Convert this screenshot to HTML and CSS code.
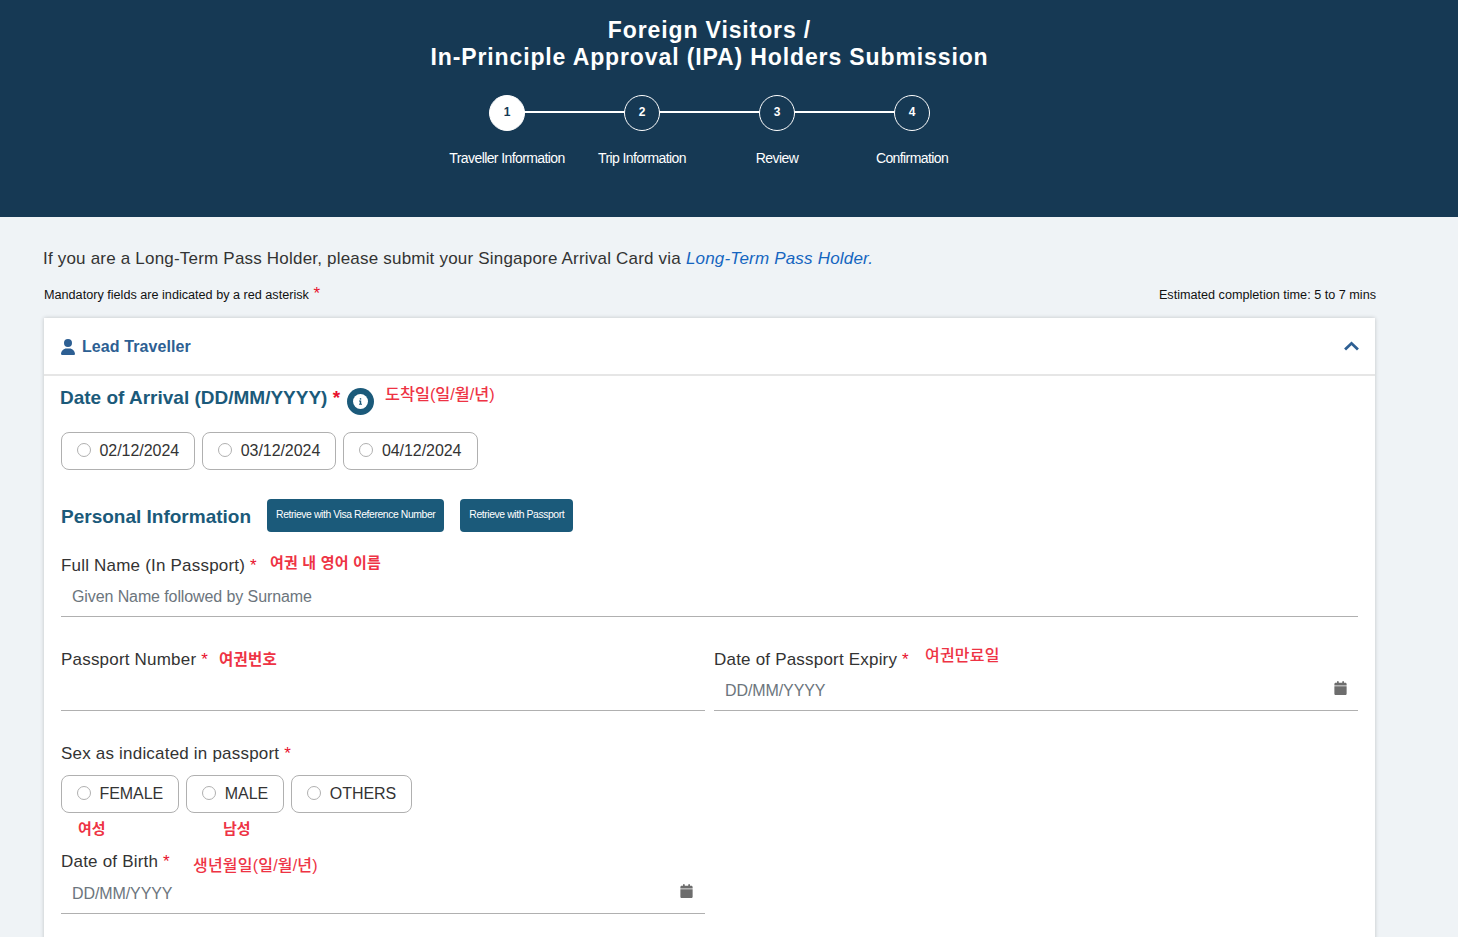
FILE: index.html
```html
<!DOCTYPE html>
<html lang="en">
<head>
<meta charset="utf-8">
<title>Foreign Visitors Submission</title>
<link rel="stylesheet" href="styles.css">
</head>
<body>
<header class="hero">
  <h1 class="hero-title">Foreign Visitors /<br>In-Principle Approval (IPA) Holders Submission</h1>
  <ol class="stepper">
    <li class="step step-active"><span class="step-dot">1</span><span class="step-label">Traveller Information</span></li>
    <li class="step"><span class="step-dot">2</span><span class="step-label">Trip Information</span></li>
    <li class="step"><span class="step-dot">3</span><span class="step-label">Review</span></li>
    <li class="step"><span class="step-dot">4</span><span class="step-label">Confirmation</span></li>
  </ol>
</header>
<main class="content">
  <p class="intro">If you are a Long-Term Pass Holder, please submit your Singapore Arrival Card via <a class="intro-link" href="#">Long-Term Pass Holder.</a></p>
  <div class="meta-row">
    <span>Mandatory fields are indicated by a red asterisk <sup class="meta-star">*</sup></span>
    <span>Estimated completion time: 5 to 7 mins</span>
  </div>
  <section class="card">
    <div class="card-head">
      <div class="card-title">
        <svg class="icon-user" viewBox="0 0 448 512" aria-hidden="true"><path fill="currentColor" d="M224 256a128 128 0 1 0 0-256 128 128 0 1 0 0 256zm-45.700 48C79.800 304 0 383.800 0 482.300 0 498.700 13.300 512 29.700 512h388.600c16.400 0 29.700-13.300 29.700-29.700C448 383.800 368.200 304 269.700 304h-91.400z"/></svg>
        <span>Lead Traveller</span>
      </div>
      <svg class="icon-chevron" viewBox="0 0 14 9" aria-hidden="true"><path d="M1 7.800 7 2l6 5.800" fill="none" stroke="currentColor" stroke-width="2.600"/></svg>
    </div>
    <div class="card-body">
      <div class="arrival-head">
        <h2 class="arrival-title">Date of Arrival (DD/MM/YYYY) <span class="star star-bold">*</span></h2>
        <span class="info-badge"><svg viewBox="0 0 15 15" aria-hidden="true"><circle cx="7.500" cy="7.500" r="7.500" fill="#fff"/><rect x="6.800" y="4.200" width="1.400" height="1.400" fill="#1b5a7a"/><path d="M6 6.400h2.200v3.400h.8v1H6v-1h.8V7.400H6z" fill="#1b5a7a"/></svg></span>
        <span class="ko ko-thin ko-arrival">도착일(일/월/년)</span>
      </div>
      <div class="pills">
        <label class="pill"><span class="radio"></span>02/12/2024</label>
        <label class="pill"><span class="radio"></span>03/12/2024</label>
        <label class="pill"><span class="radio"></span>04/12/2024</label>
      </div>
      <div class="personal-head">
        <h2 class="personal-title">Personal Information</h2>
        <button class="btn" type="button">Retrieve with Visa Reference Number</button>
        <button class="btn" type="button">Retrieve with Passport</button>
      </div>
      <div class="field field-name">
        <div class="label">Full Name (In Passport) <span class="star">*</span><span class="ko ko-name">여권 내 영어 이름</span></div>
        <div class="input placeholder">Given Name followed by Surname</div>
      </div>
      <div class="two-col">
        <div class="field">
          <div class="label">Passport Number <span class="star">*</span><span class="ko ko-passport">여권번호</span></div>
          <div class="input placeholder"></div>
        </div>
        <div class="field">
          <div class="label">Date of Passport Expiry <span class="star">*</span><span class="ko ko-thin ko-expiry">여권만료일</span></div>
          <div class="input placeholder">DD/MM/YYYY<svg class="icon-cal" viewBox="0 0 448 512" aria-hidden="true"><path fill="currentColor" d="M96 32v32H48C21.500 64 0 85.500 0 112v48h448v-48c0-26.500-21.500-48-48-48h-48V32c0-17.700-14.300-32-32-32s-32 14.300-32 32v32H160V32c0-17.700-14.300-32-32-32S96 14.300 96 32zm352 160H0v272c0 26.500 21.500 48 48 48h352c26.500 0 48-21.500 48-48V192z"/></svg></div>
        </div>
      </div>
      <div class="label label-sex">Sex as indicated in passport <span class="star">*</span></div>
      <div class="pills">
        <label class="pill"><span class="radio"></span>FEMALE</label>
        <label class="pill"><span class="radio"></span>MALE</label>
        <label class="pill"><span class="radio"></span>OTHERS</label>
      </div>
      <div class="ko-row"><span class="ko ko-female">여성</span><span class="ko ko-male">남성</span></div>
      <div class="two-col">
        <div class="field">
          <div class="label">Date of Birth <span class="star">*</span><span class="ko ko-thin ko-birth">생년월일(일/월/년)</span></div>
          <div class="input input-birth placeholder">DD/MM/YYYY<svg class="icon-cal" viewBox="0 0 448 512" aria-hidden="true"><path fill="currentColor" d="M96 32v32H48C21.500 64 0 85.500 0 112v48h448v-48c0-26.500-21.500-48-48-48h-48V32c0-17.700-14.300-32-32-32s-32 14.300-32 32v32H160V32c0-17.700-14.300-32-32-32S96 14.300 96 32zm352 160H0v272c0 26.500 21.500 48 48 48h352c26.500 0 48-21.500 48-48V192z"/></svg></div>
        </div>
        <div class="field"></div>
      </div>
    </div>
  </section>
</main>
</body>
</html>
```
FILE: styles.css
```css
* { box-sizing: border-box; }
html, body { margin: 0; height: 937px; overflow: hidden; }
body { background: #eff3f6; color: #2b2f33; font-family: "Liberation Sans", "Noto Sans CJK KR", sans-serif; }

.hero { height: 217px; background: #163954; color: #fff; padding: 17px 39px 0 0; }
.hero-title { margin: 0; font-size: 23px; line-height: 27px; font-weight: 700; letter-spacing: .88px; text-align: center; }
.stepper { list-style: none; margin: 24px 0 0; padding: 0; display: flex; justify-content: center; }
.step { width: 135px; display: flex; flex-direction: column; align-items: center; position: relative; }
.step:not(:last-child)::after { content: ""; position: absolute; top: 16px; left: 67px; width: 135px; height: 2px; background: #fff; }
.step-dot { position: relative; z-index: 1; width: 36px; height: 36px; border-radius: 50%; border: 1px solid #fff; background: #163954; display: flex; align-items: center; justify-content: center; font-size: 12px; font-weight: 700; padding-bottom: 2px; }
.step-active .step-dot { background: #fff; color: #163954; }
.step-label { margin-top: 19px; font-size: 14px; line-height: 16px; letter-spacing: -.6px; white-space: nowrap; }

.content { padding: 31px 83px 0 44px; }
.intro { margin: 0 0 0 -1px; font-size: 17px; line-height: 22px; letter-spacing: .2px; color: #333; }
.intro-link { color: #1565c0; font-style: italic; text-decoration: none; }
.meta-row { display: flex; justify-content: space-between; margin: 15px -1px 0 0; height: 21px; font-size: 12.650px; line-height: 21px; color: #111; }
.meta-star { color: #e8112d; font-size: 17px; line-height: 0; vertical-align: 0; margin-left: 1px; }

.card { margin-top: 12px; background: #fff; box-shadow: 0 0 4px rgba(0,0,0,.2); }
.card-head { height: 58px; padding: 2px 16px 0 17px; border-bottom: 2px solid #e6e6e6; display: flex; align-items: center; justify-content: space-between; }
.card-title { display: flex; align-items: center; gap: 7px; color: #2d5f93; font-size: 16px; letter-spacing: .08px; font-weight: 700; }
.icon-user { width: 14px; height: 16px; }
.icon-chevron { width: 15px; height: 10px; color: #2d5f93; margin-bottom: 2px; }

.card-body { padding: 0 17px 60px 17px; height: 700px; }
.arrival-head { display: flex; height: 56px; position: relative; }
.arrival-title { margin: 10px 0 0 -1px; font-size: 19px; line-height: 24px; font-weight: 700; color: #1b5a7a; }
.star { color: #e8112d; font-weight: 400; }
.star-bold { font-weight: 700; }
.info-badge { width: 27px; height: 27px; border-radius: 50%; background: #1b5a7a; margin: 12px 0 0 7px; display: flex; align-items: center; justify-content: center; }
.info-badge svg { width: 15px; height: 15px; }
.ko { color: #ee3344; font-weight: 700; font-size: 15px; line-height: 20px; white-space: nowrap; }
.ko-thin { font-weight: 500; font-size: 16px; }
.ko-arrival { position: absolute; left: 324px; top: 8px; font-size: 16.300px; }

.pills { display: flex; gap: 7px; }
.pill { height: 38px; padding: 0 15.100px 0 15px; border: 1px solid #b0b0b0; border-radius: 8px; display: flex; align-items: center; gap: 8.500px; font-size: 16px; letter-spacing: -.05px; color: #333; }
.radio { width: 14px; height: 14px; border: 1px solid #b0b0b0; border-radius: 50%; margin-top: -2px; }

.personal-head { display: flex; align-items: center; margin-top: 29px; height: 33px; }
.personal-title { margin: 0 16px 0 0; padding-top: 3px; font-size: 19px; font-weight: 700; color: #1b5a7a; }
.btn { height: 33px; margin-right: 16px; padding: 0 9px 2px; border: 0; border-radius: 4px; background: #1b5a7a; color: #fff; font: 10.400px "Liberation Sans", sans-serif; letter-spacing: -.41px; white-space: nowrap; }

.label { position: relative; font-size: 17px; line-height: 20px; color: #333; letter-spacing: .2px; }
.input { position: relative; height: 41px; padding: 0 11px; border-bottom: 1px solid #b0b0b0; font-size: 16px; letter-spacing: -.1px; line-height: 42px; }
.placeholder { color: #6c757d; }
.field-name { margin-top: 24px; }
.two-col { display: grid; grid-template-columns: 644px 644px; gap: 9px; }
.two-col .field { margin-top: 33px; }
.input-birth { margin-top: 1px; }
.input-birth .icon-cal { right: 12px; }
.ko-name { position: absolute; left: 209px; top: -3px; }
.ko-passport { position: absolute; left: 158px; top: 0; font-size: 15.500px; }
.ko-expiry { position: absolute; left: 211px; top: -4px; }
.ko-birth { position: absolute; left: 132px; top: 4px; }
.icon-cal { position: absolute; right: 11px; top: 11px; width: 13px; height: 14px; color: #6d6d6d; }
.label-sex { margin: 33px 0 11px; }
.ko-row { position: relative; height: 39px; }
.ko-female { position: absolute; left: 17px; top: 6px; }
.ko-male { position: absolute; left: 162px; top: 6px; }
.ko-row + .two-col .field { margin-top: 0; }
```
